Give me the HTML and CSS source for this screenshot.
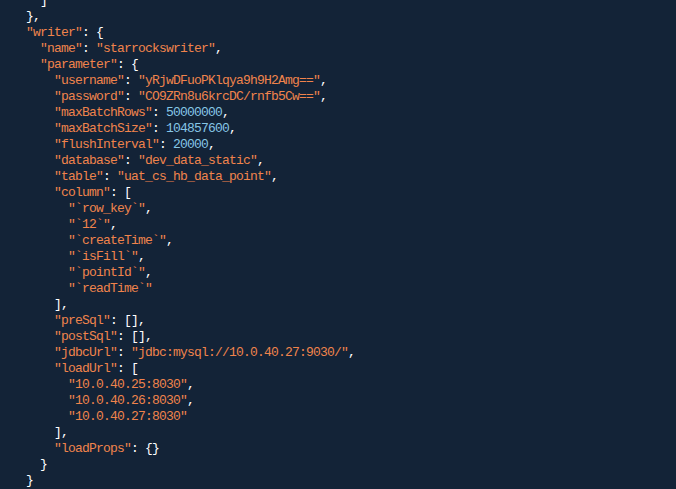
FILE: index.html
```html
<!DOCTYPE html>
<html>
<head>
<meta charset="utf-8">
<link rel="stylesheet" href="styles.css">
</head>
<body>
<pre class="code"><span class="p">  ]</span>
<span class="p">},</span>
<span class="s">"writer"</span><span class="p">: {</span>
<span class="p">  </span><span class="s">"name"</span><span class="p">: </span><span class="s">"starrockswriter"</span><span class="p">,</span>
<span class="p">  </span><span class="s">"parameter"</span><span class="p">: {</span>
<span class="p">    </span><span class="s">"username"</span><span class="p">: </span><span class="s">"yRjwDFuoPKlqya9h9H2Amg=="</span><span class="p">,</span>
<span class="p">    </span><span class="s">"password"</span><span class="p">: </span><span class="s">"CO9ZRn8u6krcDC/rnfb5Cw=="</span><span class="p">,</span>
<span class="p">    </span><span class="s">"maxBatchRows"</span><span class="p">: </span><span class="n">50000000</span><span class="p">,</span>
<span class="p">    </span><span class="s">"maxBatchSize"</span><span class="p">: </span><span class="n">104857600</span><span class="p">,</span>
<span class="p">    </span><span class="s">"flushInterval"</span><span class="p">: </span><span class="n">20000</span><span class="p">,</span>
<span class="p">    </span><span class="s">"database"</span><span class="p">: </span><span class="s">"dev_data_static"</span><span class="p">,</span>
<span class="p">    </span><span class="s">"table"</span><span class="p">: </span><span class="s">"uat_cs_hb_data_point"</span><span class="p">,</span>
<span class="p">    </span><span class="s">"column"</span><span class="p">: [</span>
<span class="p">      </span><span class="s">"`row_key`"</span><span class="p">,</span>
<span class="p">      </span><span class="s">"`12`"</span><span class="p">,</span>
<span class="p">      </span><span class="s">"`createTime`"</span><span class="p">,</span>
<span class="p">      </span><span class="s">"`isFill`"</span><span class="p">,</span>
<span class="p">      </span><span class="s">"`pointId`"</span><span class="p">,</span>
<span class="p">      </span><span class="s">"`readTime`"</span>
<span class="p">    ],</span>
<span class="p">    </span><span class="s">"preSql"</span><span class="p">: [],</span>
<span class="p">    </span><span class="s">"postSql"</span><span class="p">: [],</span>
<span class="p">    </span><span class="s">"jdbcUrl"</span><span class="p">: </span><span class="s">"jdbc:mysql://10.0.40.27:9030/"</span><span class="p">,</span>
<span class="p">    </span><span class="s">"loadUrl"</span><span class="p">: [</span>
<span class="p">      </span><span class="s">"10.0.40.25:8030"</span><span class="p">,</span>
<span class="p">      </span><span class="s">"10.0.40.26:8030"</span><span class="p">,</span>
<span class="p">      </span><span class="s">"10.0.40.27:8030"</span>
<span class="p">    ],</span>
<span class="p">    </span><span class="s">"loadProps"</span><span class="p">: {}</span>
<span class="p">  }</span>
<span class="p">}</span></pre>
</body>
</html>
```

FILE: styles.css
```css
html, body {
  margin: 0;
  padding: 0;
  background: #132337;
  height: 100%;
  overflow: hidden;
}

.code {
  margin: -7px 0 0 0;
  padding: 0 0 0 26px;
  font-family: "Liberation Mono", "DejaVu Sans Mono", monospace;
  font-size: 13px;
  letter-spacing: -0.8px;
  line-height: 16px;
  color: #ffffff;
  white-space: pre;
}

.p {
  color: #ffffff;
}

.s {
  color: #f0834c;
}

.n {
  color: #86c6e6;
}
```
